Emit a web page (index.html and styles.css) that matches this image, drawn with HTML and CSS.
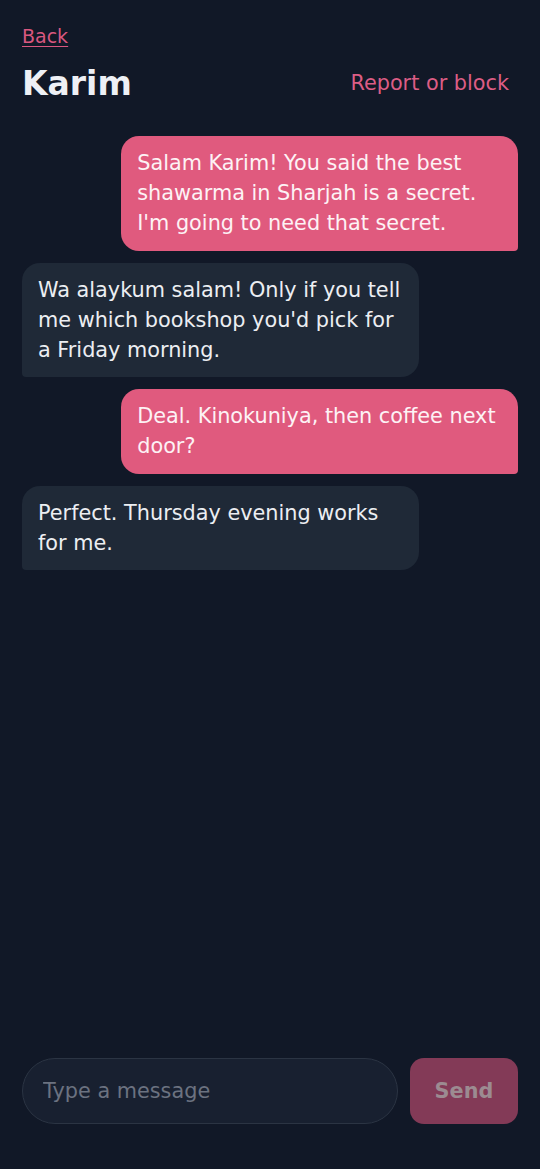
FILE: index.html
```html
<!DOCTYPE html>
<html lang="en">
<head>
  <meta charset="UTF-8" />
  <title>Karim - Chat</title>
  <link rel="stylesheet" href="styles.css">
</head>
<body>
  <div class="page">
    <div class="top">
      <a href="#" class="back">Back</a>
      <div class="header">
        <h1>Karim</h1>
        <button class="report">Report or block</button>
      </div>
    </div>

    <div class="messages">
      <div class="bubble sent">Salam Karim! You said the best shawarma in Sharjah is a secret. I'm going to need that secret.</div>
      <div class="bubble received">Wa alaykum salam! Only if you tell me which bookshop you'd pick for a Friday morning.</div>
      <div class="bubble sent">Deal. Kinokuniya, then coffee next door?</div>
      <div class="bubble received">Perfect. Thursday evening works for me.</div>
    </div>

    <form class="composer">
      <input type="text" class="msg-input" placeholder="Type a message" />
      <button type="submit" class="send" disabled>Send</button>
    </form>
  </div>
</body>
</html>
```

FILE: styles.css
```css
body {
  margin: 0;
  background-color: #111827;
  color: #f3f4f6;
  font-family: 'DejaVu Sans', sans-serif;
}
.page {
  display: flex;
  flex-direction: column;
  height: 100vh;
  box-sizing: border-box;
}
.top {
  padding: 22px 22px 0 22px;
}
.back {
  display: block;
  width: max-content;
  color: #d9577f;
  font-size: 19px;
  line-height: 28px;
  text-decoration: underline;
  text-underline-offset: 3px;
}
.header {
  display: flex;
  justify-content: space-between;
  align-items: center;
  height: 46px;
  margin-top: 10px;
}
h1 {
  margin: 0;
  font-size: 33px;
  font-weight: bold;
  color: #eef0f5;
}
.report {
  background: none;
  border: none;
  padding: 8px 9px;
  font-family: inherit;
  font-size: 20.8px;
  color: #dc5d85;
  cursor: pointer;
}
.messages {
  flex: 1;
  display: flex;
  flex-direction: column;
  gap: 12px;
  padding: 30px 22px 0 22px;
}
.bubble {
  max-width: 80%;
  box-sizing: border-box;
  padding: 12px 16px;
  font-size: 20.8px;
  line-height: 30.2px;
  border-radius: 18px;
}
.sent {
  align-self: flex-end;
  width: 80%;
  background-color: #e05a7e;
  color: #fdf2f5;
  border-bottom-right-radius: 4px;
}
.received {
  align-self: flex-start;
  width: 80%;
  background-color: #1f2937;
  color: #eceef2;
  border-bottom-left-radius: 4px;
}
.composer {
  display: flex;
  gap: 12px;
  padding: 0 22px 45px 22px;
  margin: 0;
}
.msg-input {
  flex: 1;
  height: 66px;
  box-sizing: border-box;
  padding: 0 20px;
  border: 1px solid #2b3443;
  border-radius: 999px;
  background-color: #182030;
  color: #f3f4f6;
  font-family: inherit;
  font-size: 20.8px;
}
.msg-input::placeholder {
  color: #6b7280;
}
.send {
  width: 108px;
  height: 66px;
  border: none;
  border-radius: 14px;
  background-color: #833a57;
  color: #9c8b91;
  font-family: inherit;
  font-size: 20.8px;
  font-weight: bold;
}
```
